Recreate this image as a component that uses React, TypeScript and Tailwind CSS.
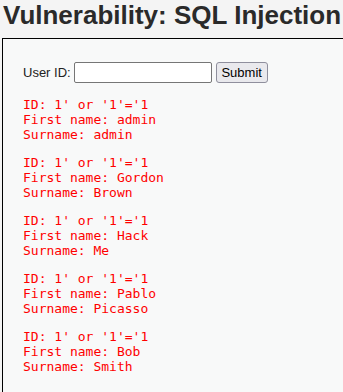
import React from "react";

const rows = [
  ["admin", "admin"],
  ["Gordon", "Brown"],
  ["Hack", "Me"],
  ["Pablo", "Picasso"],
  ["Bob", "Smith"],
];

export default function App() {
  return (
    <div
      className="w-[343px] h-[392px] overflow-hidden bg-[#f4f4f4]"
      style={{ fontFamily: '"Liberation Sans", Arial, sans-serif' }}
    >
      <h1 className="m-0 pl-[3px] pt-0 text-[26px] font-bold leading-[30px] text-[#2a2a2a] whitespace-nowrap">
        Vulnerability: SQL Injection
      </h1>
      <div className="mt-[8px] ml-[2px] border-l border-t border-black bg-[#f8f9f9] h-[400px] pl-[20px] pt-[23px]">
        <div className="flex items-center h-[21px] text-[13px] text-[#222]">
          <span>User ID:</span>
          <input
            type="text"
            className="ml-[3px] w-[138px] h-[21px] bg-white border border-[#767676] rounded-[2px] outline-none"
          />
          <button className="ml-[4px] w-[52px] h-[21px] bg-[#e9e9ed] border border-[#8f8f9d] rounded-[3px] text-[13px] text-black leading-none">
            Submit
          </button>
        </div>
        <div className="mt-[14px] flex flex-col gap-[13px]">
          {rows.map(([f, s], i) => (
            <pre
              key={i}
              className="m-0 text-[13px] leading-[15px] text-[#ff0000]"
              style={{ fontFamily: '"DejaVu Sans Mono", monospace' }}
            >
              {`ID: 1' or '1'='1\nFirst name: ${f}\nSurname: ${s}`}
            </pre>
          ))}
        </div>
      </div>
    </div>
  );
}
